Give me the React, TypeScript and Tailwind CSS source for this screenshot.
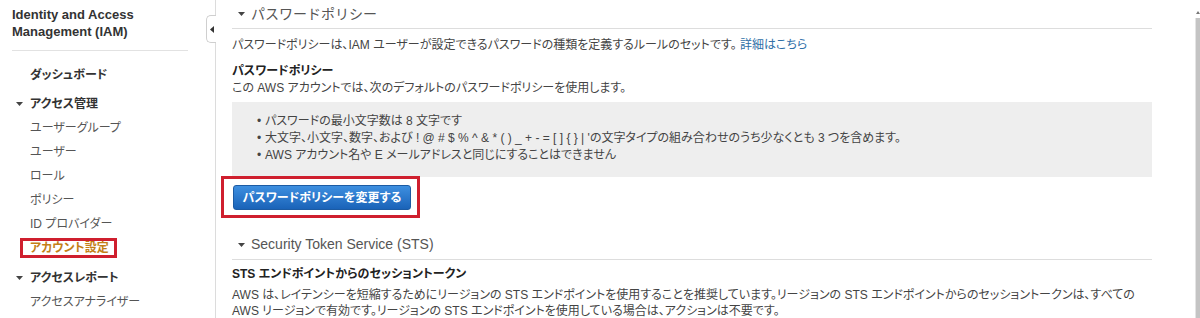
import React from 'react';

const font = "font-['Liberation_Sans','Noto_Sans_CJK_JP',sans-serif] [font-feature-settings:'palt']";

const Caret: React.FC<{ className?: string }> = ({ className }) => (
  <svg width="7" height="4" viewBox="0 0 7 4" className={className}>
    <path d="M0 0 H7 L3.5 4 Z" fill="#444" />
  </svg>
);

const NavItem: React.FC<{ label: string }> = ({ label }) => (
  <div className="h-[24px] leading-[24px] pl-[30px] text-[12px] text-[#555]">{label}</div>
);

const NavGroup: React.FC<{ label: string; className?: string }> = ({ label, className }) => (
  <div className={`h-[24px] flex items-center pl-[16px] text-[12px] font-bold text-[#333] ${className ?? ''}`}>
    <Caret className="mr-[7px]" />
    {label}
  </div>
);

const Sidebar: React.FC = () => {
  return (
    <aside className="relative w-[216px] shrink-0 border-r border-[#dcdcdc] h-[318px]">
      <div className="pl-[12px] pt-[6px] pr-[12px]">
        <h1 className="text-[13px] leading-[17px] font-bold text-[#333]">
          Identity and Access
          <br />
          Management (IAM)
        </h1>
        <div className="mt-[10px] w-[176px] border-t border-[#e2e2e2]" />
      </div>
      <nav className="mt-[12px]">
        <div className="h-[24px] leading-[24px] pl-[30px] text-[12px] font-bold text-[#333]">ダッシュボード</div>
        <NavGroup label="アクセス管理" className="mt-[5px]" />
        <NavItem label="ユーザーグループ" />
        <NavItem label="ユーザー" />
        <NavItem label="ロール" />
        <NavItem label="ポリシー" />
        <NavItem label="ID プロバイダー" />
        <div className="h-[24px] leading-[24px] pl-[30px] text-[12px] font-bold text-[#c47f17]">
          <span className="relative">
            アカウント設定
            <span className="absolute -left-[10px] -right-[8px] -top-[3px] -bottom-[3px] border-[3px] border-[#cf1f2e]" />
          </span>
        </div>
        <NavGroup label="アクセスレポート" className="mt-[6px]" />
        <NavItem label="アクセスアナライザー" />
      </nav>
      {/* collapse tab */}
      <div className="absolute right-[-1px] top-[15px] w-[10px] h-[28px] bg-white border border-r-0 border-[#cfcfcf] rounded-l-[5px] flex items-center justify-center">
        <svg width="4" height="7" viewBox="0 0 4 7">
          <path d="M4 0 V7 L0 3.5 Z" fill="#333" />
        </svg>
      </div>
    </aside>
  );
};

const SectionHeading: React.FC<{ title: string; className?: string }> = ({ title, className }) => (
  <div
    className={`h-[29px] flex items-center border-b border-[#dddddd] text-[14px] text-[#555] [font-feature-settings:normal] ${className ?? ''}`}
  >
    <Caret className="ml-[6px] mr-[6px]" />
    <span>{title}</span>
  </div>
);

export default function App() {
  return (
    <div className={`flex w-[1200px] h-[318px] overflow-hidden bg-white ${font}`}>
      <Sidebar />
      <main className="flex-1 pl-[16px] pr-[43px] text-[12px] text-[#444]">
        <SectionHeading title="パスワードポリシー" />
        <p className="mt-[8px] leading-[17px]">
          パスワードポリシーは、IAM ユーザーが設定できるパスワードの種類を定義するルールのセットです。{' '}
          <a className="text-[#2f6fa8]">詳細はこちら</a>
        </p>
        <div className="mt-[9px] leading-[17px] font-bold text-[#222]">パスワードポリシー</div>
        <p className="leading-[17px]">この AWS アカウントでは、次のデフォルトのパスワードポリシーを使用します。</p>
        <ul className="mt-[5px] bg-[#eeeeee] pt-[11px] pb-[13px] pl-[25px] leading-[17px]">
          {[
            'パスワードの最小文字数は 8 文字です',
            "大文字、小文字、数字、および ! @ # $ % ^ & * ( ) _ + - = [ ] { } | 'の文字タイプの組み合わせのうち少なくとも 3 つを含めます。",
            'AWS アカウント名や E メールアドレスと同じにすることはできません',
          ].map((t) => (
            <li key={t} className="flex">
              <span className="w-[8px] shrink-0">•</span>
              <span>{t}</span>
            </li>
          ))}
        </ul>
        <div className="mt-[8px] flex">
          <div className="relative ml-[1px]">
            <button className="h-[25px] w-[178px] rounded-[3px] border border-[#1c5ba3] bg-gradient-to-b from-[#3d8fe0] to-[#1a63b8] text-[12px] font-bold text-white">
              パスワードポリシーを変更する
            </button>
            <span className="absolute -left-[12px] -right-[9px] -top-[9px] -bottom-[8px] border-[3px] border-[#cf1f2e]" />
          </div>
        </div>
        <SectionHeading title="Security Token Service (STS)" className="mt-[20px] h-[30px]" />
        <div className="mt-[6px] leading-[17px] font-bold text-[#222]">STS エンドポイントからのセッショントークン</div>
        <p className="mt-[4px] leading-[16px]">
          AWS は、レイテンシーを短縮するためにリージョンの STS エンドポイントを使用することを推奨しています。リージョンの STS エンドポイントからのセッショントークンは、すべての
          AWS リージョンで有効です。リージョンの STS エンドポイントを使用している場合は、アクションは不要です。
        </p>
      </main>
      <div className="w-[5px] shrink-0 flex flex-col">
        <div className="h-[18px] flex items-end justify-center pb-[4px]">
          <div className="w-0 h-0 border-l-[2px] border-r-[2px] border-b-[3px] border-l-transparent border-r-transparent border-b-[#777]" />
        </div>
        <div className="flex-1 bg-[#c4c4c4] border-l border-[#e4e4e4]" />
      </div>
    </div>
  );
}
